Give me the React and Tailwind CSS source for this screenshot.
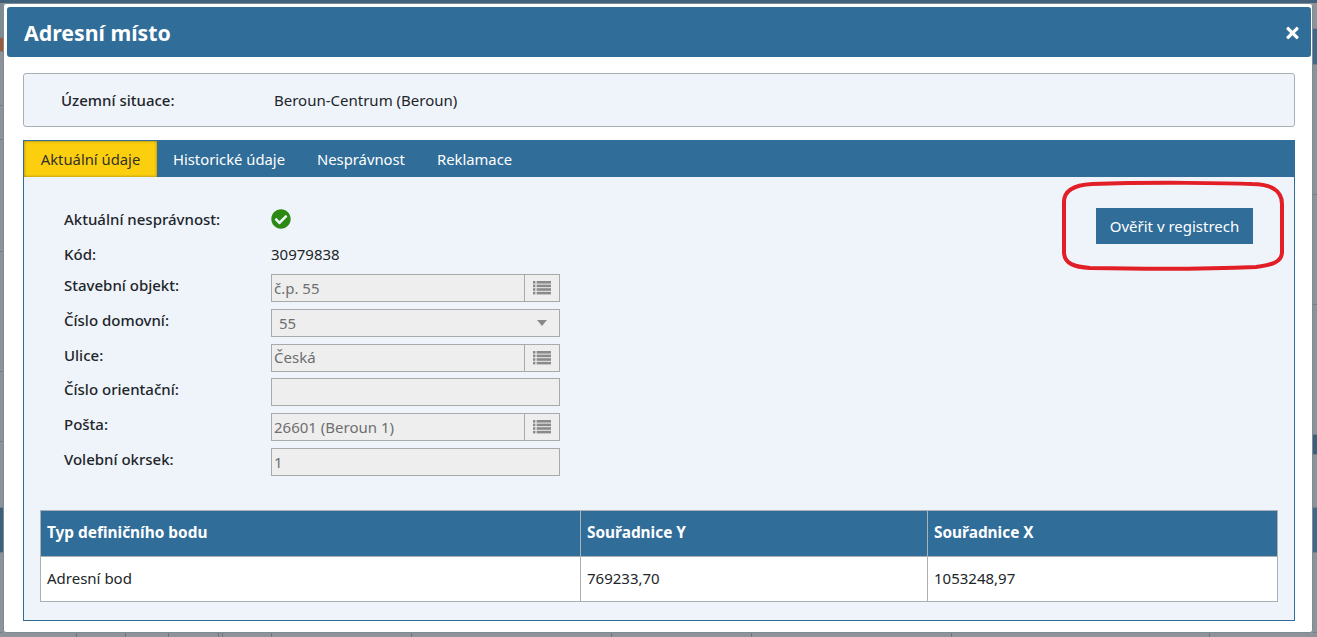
import React from "react";
import { FaCheckCircle, FaTimes } from "react-icons/fa";

const font = "font-['Noto_Sans','Open_Sans',sans-serif]";

function Strip({ items, className }) {
  return (
    <div className={`flex shrink-0 flex-col ${className}`}>
      {items.map(([h, c], i) => (
        <div key={i} style={{ height: h, background: c }} className="border-b border-[#76808a]" />
      ))}
    </div>
  );
}

function Field({ label, children, className = "h-[34.75px]" }) {
  return (
    <div className={`flex items-start ${className}`}>
      <div className="w-[207px] text-[15px] font-medium leading-[22px] text-[#212529]">{label}</div>
      {children}
    </div>
  );
}

function ListIcon() {
  return (
    <svg width="18" height="14" viewBox="0 0 18 14" fill="#8a8a8a">
      {[0, 3.6, 7.2, 10.8].map((y) => (
        <g key={y}>
          <rect x="0" y={y} width="2.4" height="2.6" />
          <rect x="3.6" y={y} width="14.4" height="2.6" />
        </g>
      ))}
    </svg>
  );
}

function Box({ children, icon, select, textClass = "pl-[2px]" }) {
  return (
    <div className="flex h-[28px] w-[289px] items-stretch border border-[#aaaaaa] bg-[#eeeeee] text-[15px] text-[#6f6f6f]">
      <div className={`flex flex-1 items-center ${textClass}`}>{children}</div>
      {icon && (
        <div className="flex w-[35px] items-center justify-center border-l border-[#aaaaaa]">
          <ListIcon />
        </div>
      )}
      {select && (
        <div className="flex w-[34px] items-center justify-center">
          <svg width="10" height="6" viewBox="0 0 10 6"><path d="M0 0h10L5 6z" fill="#8a8a8a" /></svg>
        </div>
      )}
    </div>
  );
}

export default function App() {
  return (
    <div className={`flex h-[637px] w-full flex-col overflow-hidden bg-[#8d9398] ${font}`}>
      <div className="h-[3px] shrink-0 bg-[#42627c]" />
      <div className="flex flex-1">
        <Strip
          className="w-[3px]"
          items={[[35, "#7f8a92"], [14, "#9c5a38"], [54, "#8d9398"], [34, "#8d9398"], [112, "#8d9398"], [120, "#8d9398"], [70, "#8d9398"], [66, "#8d9398"], [45, "#3e5f78"], [80, "#8d9398"]]}
        />
        <div className="relative flex h-[630px] min-w-0 flex-1 flex-col rounded-[3px] border border-[#7c8b96] bg-white">
          <div className="ml-[3px] mr-[1px] mt-[3px] flex h-[50px] items-center justify-between rounded-[3px] bg-[#306d99] pl-[17px] pr-[12px] pt-[2px] text-white">
            <h1 className="text-[21.3px] font-bold leading-none">Adresní místo</h1>
            <FaTimes className="h-[18px] w-[13px]" />
          </div>

          <div className="ml-[19px] mr-[17px] mt-[16px] flex h-[54px] items-center rounded-[3px] border border-[#aab0b5] bg-[#eff4fb] text-[15px] text-[#212529]">
            <div className="w-[250px] pl-[37px] font-medium">Územní situace:</div>
            <div>Beroun-Centrum (Beroun)</div>
          </div>

          <div className="ml-[19px] mr-[17px] mt-[13px] flex h-[481px] flex-col border border-[#306d99] bg-[#eff4fb]">
            <div className="flex h-[36px] items-stretch bg-[#306d99] text-[14.8px] text-white">
              <div className="flex w-[133px] items-center justify-center bg-[#fbcf0e] text-[#33302a] shadow-[inset_0_0_3px_rgba(120,100,20,0.8)]">Aktuální údaje</div>
              <div className="flex items-center pl-[16px]">Historické údaje</div>
              <div className="flex items-center pl-[32px]">Nesprávnost</div>
              <div className="flex items-center pl-[32px]">Reklamace</div>
            </div>

            <div className="relative flex items-start justify-between pl-[40px] pr-[41px] pt-[31px]">
              <div className="flex flex-col">
                <Field label="Aktuální nesprávnost:" className="h-[35px]">
                  <FaCheckCircle className="mt-[1px] h-[20px] w-[20px] text-[#2c8a13]" />
                </Field>
                <Field label="Kód:" className="h-[31px]">
                  <div className="text-[15px] leading-[22px] text-[#212529]">30979838</div>
                </Field>
                <Field label="Stavební objekt:"><Box icon>č.p. 55</Box></Field>
                <Field label="Číslo domovní:"><Box select textClass="pl-[7px]">55</Box></Field>
                <Field label="Ulice:"><Box icon>Česká</Box></Field>
                <Field label="Číslo orientační:"><Box /></Field>
                <Field label="Pošta:"><Box icon>26601 (Beroun 1)</Box></Field>
                <Field label="Volební okrsek:"><Box>1</Box></Field>
              </div>
              <button className="h-[36px] w-[157px] bg-[#306d99] text-[15px] text-white">Ověřit v registrech</button>
              <svg className="absolute right-[8px] top-[3px]" width="226" height="92" viewBox="0 0 226 92" fill="none">
                <path
                  d="M32 4C90 2 170 3 192 4C210 4 222 10 222 24V72C222 82 212 85 196 87C150 89 80 89 30 88C15 87 4 84 4 72V22C4 10 14 5 32 4Z"
                  stroke="#e21f26"
                  strokeWidth="4"
                />
              </svg>
            </div>

            <div className="mx-[16px] mt-[27px]">
              <table className="w-[1238px] table-fixed border-collapse text-[15px]">
                <thead>
                  <tr className="h-[46px] bg-[#306d99] text-left text-[15.4px] text-white">
                    <th className="w-[540px] border border-[#aab0b5] pl-[6px] font-bold">Typ definičního bodu</th>
                    <th className="w-[347px] border border-[#aab0b5] pl-[6px] font-bold">Souřadnice Y</th>
                    <th className="border border-[#aab0b5] pl-[6px] font-bold">Souřadnice X</th>
                  </tr>
                </thead>
                <tbody>
                  <tr className="h-[45px] bg-white text-[#212529]">
                    <td className="border border-[#aab0b5] pl-[6px]">Adresní bod</td>
                    <td className="border border-[#aab0b5] pl-[6px]">769233,70</td>
                    <td className="border border-[#aab0b5] pl-[6px]">1053248,97</td>
                  </tr>
                </tbody>
              </table>
            </div>
          </div>
        </div>
        <Strip
          className="w-[4px]"
          items={[[26, "#8d9398"], [36, "#3e6a8a"], [130, "#8d9398"], [110, "#8d9398"], [130, "#8d9398"], [20, "#3e5f78"], [53, "#8d9398"], [45, "#3e6a8a"], [80, "#8d9398"]]}
        />
      </div>
      <div className="flex h-[4px] shrink-0">
        {[77, 49, 43, 50, 4, 49, 140, 200, 140, 200, 258].map((w, i) => (
          <div key={i} style={{ width: w }} className="h-full border-r border-[#6f767c]" />
        ))}
      </div>
    </div>
  );
}
